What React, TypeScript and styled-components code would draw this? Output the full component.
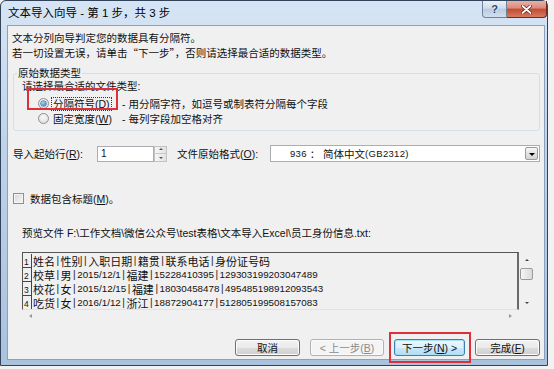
import { Fragment } from 'react';
import styled, { createGlobalStyle } from 'styled-components';

const GlobalStyle = createGlobalStyle`
  body {
    margin: 0;
    background: #f2f2f2;
    font-family: 'Liberation Sans', 'Noto Sans CJK SC', sans-serif;
    font-size: 10.5px;
    color: #111;
  }
`;

const Window = styled.div`
  width: 548px;
  height: 366px;
  box-sizing: border-box;
  display: flex;
  flex-direction: column;
  border: 1px solid #33435a;
  border-radius: 6px 6px 0 0;
  background: linear-gradient(180deg, #d6e5f5 0%, #bed3ea 40%, #a9c2de 100%);
`;

const TitleBar = styled.div`
  height: 24px;
  flex-shrink: 0;
  display: flex;
  align-items: flex-start;
  padding-left: 7px;
`;

const Title = styled.div`
  flex: 1;
  line-height: 25px;
  font-size: 11.5px;
  color: #000;
`;

const CaptionButton = styled.div<{ $close?: boolean }>`
  width: ${(p) => (p.$close ? 40 : 25)}px;
  height: 17px;
  box-sizing: border-box;
  display: flex;
  align-items: center;
  justify-content: center;
  border: 1px solid ${(p) => (p.$close ? '#6b2a22' : '#6f8099')};
  border-top: none;
  ${(p) => (p.$close ? 'border-left: none;' : '')}
  border-radius: ${(p) => (p.$close ? '0 0 4px 0' : '0 0 0 4px')};
  background: ${(p) =>
    p.$close
      ? 'linear-gradient(180deg, #eab0a3 0%, #d98a7a 45%, #c5492f 50%, #d47a62 100%)'
      : 'linear-gradient(180deg, #e8f0f9 0%, #cfdcec 45%, #b9cbe0 50%, #d3dfee 100%)'};
  color: #284670;
  font-weight: bold;
  font-size: 11px;
  text-shadow: 0 0 2px #fff;
`;

const Client = styled.div`
  flex: 1;
  margin: 0 2px 5px 6px;
  border: 1px solid #8ba0bb;
  background: #f0f0f0;
  padding: 0 4px;
  display: flex;
  flex-direction: column;
`;

const Intro = styled.div`
  margin-top: 4px;
  font-family: 'Noto Sans CJK SC', sans-serif;
  line-height: 15px;
`;

const GroupBox = styled.fieldset`
  margin: 7px 0 0 1px;
  padding: 0 0 4px 3px;
  border: 1px solid #d5dfe5;
  border-radius: 3px;
  min-width: 0;
`;

const GroupLegend = styled.legend`
  padding: 0 1px;
  line-height: 12px;
`;

const Prompt = styled.div`
  margin: 1px 0 0 5px;
  line-height: 13px;
`;

const RadioGrid = styled.div`
  display: grid;
  grid-template-columns: 84px auto;
  grid-auto-rows: 15px;
  align-items: center;
  margin: 3px 0 0 21px;
`;

const RadioCell = styled.div`
  position: relative;
  display: flex;
  align-items: center;
  gap: 2px;
  height: 15px;
`;

const Radio = styled.span<{ $checked?: boolean }>`
  width: 11px;
  height: 11px;
  box-sizing: border-box;
  border-radius: 50%;
  border: 1px solid #8e8f8f;
  background: radial-gradient(circle at 50% 35%, #fafafa, #d8d8d8);
  display: flex;
  align-items: center;
  justify-content: center;

  &::after {
    content: '';
    display: ${(p) => (p.$checked ? 'block' : 'none')};
    width: 5px;
    height: 5px;
    border-radius: 50%;
    background: radial-gradient(circle at 40% 35%, #9fdcfb, #1c6fb4);
    box-shadow: 0 0 0 0.5px #174f84;
  }
`;

const FocusLabel = styled.span<{ $focused?: boolean }>`
  border: 1px dotted ${(p) => (p.$focused ? '#333' : 'transparent')};
  padding: 0 1px;
  line-height: 12px;
`;

const Key = styled.span`
  text-decoration: underline;
  text-underline-offset: 1px;
`;

const Highlight = styled.span<{ $l: number; $t: number; $w: number; $h: number }>`
  position: absolute;
  left: ${(p) => p.$l}px;
  top: ${(p) => p.$t}px;
  width: ${(p) => p.$w}px;
  height: ${(p) => p.$h}px;
  box-sizing: border-box;
  border: 2px solid #dd3038;
  pointer-events: none;
`;

const FieldRow = styled.div`
  display: flex;
  align-items: center;
  height: 17px;
  margin: 14px 0 0 1px;
`;

const FieldLabel = styled.span<{ $w: number; $gap?: number }>`
  width: ${(p) => p.$w}px;
  margin-left: ${(p) => p.$gap ?? 0}px;
  flex-shrink: 0;
  white-space: nowrap;
`;

const TextBox = styled.div`
  width: 57px;
  height: 16px;
  box-sizing: border-box;
  border: 1px solid #abadb3;
  background: #fff;
  padding-left: 3px;
  line-height: 14px;
  font-size: 10px;
`;

const Spin = styled.div`
  width: 13px;
  height: 16px;
  box-sizing: border-box;
  display: flex;
  flex-direction: column;
  border: 1px solid #c3c3c3;
  background: linear-gradient(90deg, #f6f6f6, #e2e2e2);
`;

const SpinHalf = styled.div`
  flex: 1;
  display: flex;
  align-items: center;
  justify-content: center;
  & + & {
    border-top: 1px solid #c9c9c9;
  }
`;

const Arrow = styled.span<{ $dir: 'up' | 'down' | 'left' | 'right'; $size?: number; $color?: string }>`
  width: 0;
  height: 0;
  border: ${(p) => p.$size ?? 3}px solid transparent;
  ${(p) => {
    const s = p.$size ?? 3;
    const c = p.$color ?? '#333';
    if (p.$dir === 'up') return `border-bottom-color: ${c}; border-top-width: 0; margin-bottom: 1px;`;
    if (p.$dir === 'down') return `border-top-color: ${c}; border-bottom-width: 0; margin-top: 1px;`;
    if (p.$dir === 'left') return `border-right-color: ${c}; border-left-width: 0; border-right-width: ${s + 1}px;`;
    return `border-left-color: ${c}; border-right-width: 0; border-left-width: ${s + 1}px;`;
  }}
`;

const Select = styled.div`
  flex: 1;
  height: 17px;
  box-sizing: border-box;
  border: 1px solid #abadb3;
  background: #fff;
  display: flex;
  align-items: center;
  padding-left: 19px;
  white-space: nowrap;
`;

const Small = styled.span`
  font-size: 9.5px;
  letter-spacing: 0.3px;
`;

const DropButton = styled.span`
  margin-left: auto;
  margin-right: 1px;
  width: 13px;
  height: 13px;
  box-sizing: border-box;
  border: 1px solid #9c9c9c;
  border-radius: 2px;
  background: linear-gradient(180deg, #f7f7f7, #e3e3e3 50%, #d4d4d4);
  display: flex;
  align-items: center;
  justify-content: center;
`;

const CheckRow = styled.div`
  display: flex;
  align-items: center;
  gap: 6px;
  height: 14px;
  margin: 29px 0 0 1px;
`;

const CheckBox = styled.span`
  width: 11px;
  height: 11px;
  box-sizing: border-box;
  border: 1px solid #8e8f8f;
  background: linear-gradient(135deg, #d6d6d6, #f8f8f8);
  box-shadow: inset 0 0 0 1px #f4f4f4;
`;

const PreviewLabel = styled.div`
  margin: 21px 0 0 10px;
  line-height: 14px;
  white-space: nowrap;
`;

const Preview = styled.div`
  display: grid;
  grid-template-columns: 1fr 16px;
  grid-template-rows: 58px 12px;
  margin: 12px 5px 0 10px;
`;

const ListBox = styled.div`
  border-top: 1px solid #555;
  border-left: 1px solid #555;
  border-right: 2px solid #6a6a6a;
  border-bottom: 1px solid #e2e2e2;
  padding-top: 1px;
  overflow: hidden;
`;

const PreviewRow = styled.div`
  display: flex;
  height: 14px;
  white-space: nowrap;
  overflow: hidden;
`;

const RowNum = styled.span`
  width: 9px;
  flex-shrink: 0;
  box-sizing: border-box;
  border-right: 1px solid #444;
  border-bottom: 1px solid #444;
  padding-left: 1px;
  display: flex;
  align-items: flex-end;
  font-size: 8.5px;
  line-height: 10px;
`;

const RowText = styled.span`
  padding-left: 1px;
  display: flex;
  align-items: center;
  height: 14px;
  color: #111;
`;

const Han = styled.span`
  font-family: 'Noto Sans CJK SC', sans-serif;
  font-size: 11px;
  line-height: 14px;
`;

const Num = styled.span`
  font-size: 9.8px;
  line-height: 14px;
`;

const Sep = styled(Num)`
  margin: 0 1.5px;
  font-size: 10px;
  color: #222;
`;

const VScroll = styled.div`
  display: flex;
  flex-direction: column;
  align-items: center;
`;

const ScrollButton = styled.span`
  width: 16px;
  height: 16px;
  flex-shrink: 0;
  display: flex;
  align-items: center;
  justify-content: center;
`;

const ScrollTrack = styled.span`
  flex: 1;
`;

const Thumb = styled.span`
  width: 13px;
  height: 12px;
  box-sizing: border-box;
  border: 1px solid #9a9a9a;
  border-radius: 2px;
  background: linear-gradient(90deg, #f5f5f5, #dadada);
  margin-left: -1px;
`;

const HScroll = styled.div`
  display: flex;
  align-items: center;
  justify-content: space-between;
  padding-right: 1px;
`;

const ButtonRow = styled.div`
  display: flex;
  justify-content: flex-end;
  gap: 10px;
  margin-top: 17px;
`;

const ButtonWrap = styled.div`
  position: relative;
`;

const Button = styled.div<{ $w: number; $variant?: 'default' | 'disabled' }>`
  width: ${(p) => p.$w}px;
  height: 17px;
  box-sizing: border-box;
  display: flex;
  align-items: center;
  justify-content: center;
  border-radius: 3px;
  white-space: nowrap;
  border: 1px solid
    ${(p) => (p.$variant === 'default' ? '#3c7fb1' : p.$variant === 'disabled' ? '#adb2b5' : '#707070')};
  color: ${(p) => (p.$variant === 'disabled' ? '#8a8a8a' : '#111')};
  background: ${(p) =>
    p.$variant === 'disabled'
      ? '#f4f4f4'
      : p.$variant === 'default'
        ? 'linear-gradient(180deg, #eaf6fd 0%, #dff1fc 50%, #c9e8fb 51%, #b5dcf4 100%)'
        : 'linear-gradient(180deg, #f2f2f2 0%, #ebebeb 50%, #dddddd 51%, #cfcfcf 100%)'};
  box-shadow: inset 0 0 0 1px ${(p) => (p.$variant === 'default' ? '#a8e0f7' : '#fbfbfb')};
`;

const rows = [
  '姓名|性别|入职日期|籍贯|联系电话|身份证号码',
  '校草|男|2015/12/1|福建|15228410395|129303199203047489',
  '校花|女|2015/12/15|福建|18030458478|495485198912093543',
  '吃货|女|2016/1/12|浙江|18872904177|512805199508157083',
];

function RowContent({ line }: { line: string }) {
  const fields = line.split('|');
  return (
    <RowText>
      {fields.map((f, i) => (
        <Fragment key={i}>
          {i > 0 && <Sep>|</Sep>}
          {/[\u4e00-\u9fff]/.test(f) ? <Han>{f}</Han> : <Num>{f}</Num>}
        </Fragment>
      ))}
    </RowText>
  );
}

function App() {
  return (
    <>
      <GlobalStyle />
      <Window>
        <TitleBar>
          <Title>文本导入向导 - 第 1 步，共 3 步</Title>
          <CaptionButton>?</CaptionButton>
          <CaptionButton $close>
            <svg width="11" height="9" viewBox="0 0 11 9">
              <path d="M1.5 1 L9.5 8 M9.5 1 L1.5 8" stroke="#5a1c14" strokeWidth="3.2" strokeLinecap="round" />
              <path d="M1.5 1 L9.5 8 M9.5 1 L1.5 8" stroke="#fff" strokeWidth="1.8" strokeLinecap="round" />
            </svg>
          </CaptionButton>
        </TitleBar>

        <Client>
          <Intro>
            <div>文本分列向导判定您的数据具有分隔符。</div>
            <div>若一切设置无误，请单击“下一步”，否则请选择最合适的数据类型。</div>
          </Intro>

          <GroupBox>
            <GroupLegend>原始数据类型</GroupLegend>
            <Prompt>请选择最合适的文件类型:</Prompt>
            <RadioGrid>
              <RadioCell>
                <Radio $checked />
                <FocusLabel $focused>
                  分隔符号(<Key>D</Key>)
                </FocusLabel>
                <Highlight $l={-11} $t={-8} $w={91} $h={22} />
              </RadioCell>
              <span>- 用分隔字符，如逗号或制表符分隔每个字段</span>
              <RadioCell>
                <Radio />
                <FocusLabel>
                  固定宽度(<Key>W</Key>)
                </FocusLabel>
              </RadioCell>
              <span>- 每列字段加空格对齐</span>
            </RadioGrid>
          </GroupBox>

          <FieldRow>
            <FieldLabel $w={84}>
              导入起始行(<Key>R</Key>):
            </FieldLabel>
            <TextBox>1</TextBox>
            <Spin>
              <SpinHalf>
                <Arrow $dir="up" $size={2.5} $color="#555" />
              </SpinHalf>
              <SpinHalf>
                <Arrow $dir="down" $size={2.5} $color="#555" />
              </SpinHalf>
            </Spin>
            <FieldLabel $w={93} $gap={10}>
              文件原始格式(<Key>O</Key>):
            </FieldLabel>
            <Select>
              <Small>936</Small>&nbsp;：&nbsp;简体中文<Small>(GB2312)</Small>
              <DropButton>
                <Arrow $dir="down" $size={3} $color="#000" />
              </DropButton>
            </Select>
          </FieldRow>

          <CheckRow>
            <CheckBox />
            <span>
              数据包含标题(<Key>M</Key>)。
            </span>
          </CheckRow>

          <PreviewLabel>预览文件 F:\工作文档\微信公众号\test表格\文本导入Excel\员工身份信息.txt:</PreviewLabel>

          <Preview>
            <ListBox>
              {rows.map((line, i) => (
                <PreviewRow key={i}>
                  <RowNum>{i + 1}</RowNum>
                  <RowContent line={line} />
                </PreviewRow>
              ))}
            </ListBox>
            <VScroll>
              <ScrollButton>
                <Arrow $dir="up" $size={2.5} $color="#444" />
              </ScrollButton>
              <Thumb />
              <ScrollTrack />
              <ScrollButton>
                <Arrow $dir="down" $size={2.5} $color="#444" />
              </ScrollButton>
            </VScroll>
            <HScroll>
              <ScrollButton>
                <Arrow $dir="left" $size={2.5} $color="#999" />
              </ScrollButton>
              <ScrollButton>
                <Arrow $dir="right" $size={2.5} $color="#999" />
              </ScrollButton>
            </HScroll>
          </Preview>

          <ButtonRow>
            <Button $w={65}>取消</Button>
            <Button $w={74} $variant="disabled">
              &lt; 上一步(<Key>B</Key>)
            </Button>
            <ButtonWrap>
              <Button $w={71} $variant="default">
                下一步(<Key>N</Key>) &gt;
              </Button>
              <Highlight $l={-5} $t={-7} $w={82} $h={31} />
            </ButtonWrap>
            <Button $w={65}>
              完成(<Key>F</Key>)
            </Button>
          </ButtonRow>
        </Client>
      </Window>
    </>
  );
}

export default App;
